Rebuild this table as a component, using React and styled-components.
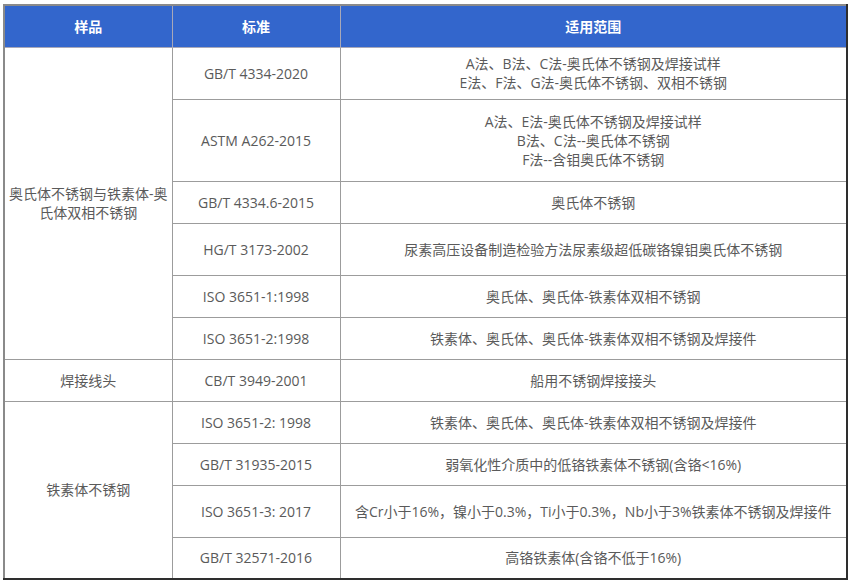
import React from "react";
import styled, { createGlobalStyle } from "styled-components";

const Global = createGlobalStyle`
  html, body { margin: 0; padding: 0; background: #fff; }
  body { font-family: "Open Sans", "Noto Sans CJK SC", sans-serif; }
`;

const Page = styled.div`
  padding: 4px 4px 0 3px;
`;

const Table = styled.table`
  width: 845px;
  border-collapse: collapse;
  table-layout: fixed;
  border-style: solid;
  border-width: 2px;
  border-color: #8a8a8a #2e2e2e #2e2e2e #8a8a8a;
  font-size: 14px;
  line-height: 19px;
  color: #5a5a5a;
`;

const Row = styled.tr`
  height: ${(p) => p.$h}px;
`;

const Head = styled.th`
  background: #3366cc;
  color: #fff;
  font-weight: bold;
  font-size: 14px;
  text-align: center;
  vertical-align: middle;
  border: 1px solid #a8a8b8;
  padding: 0;
`;

const Cell = styled.td`
  border: 1px solid #9c9c9c;
  text-align: center;
  vertical-align: middle;
  padding: 0 4px;
  white-space: nowrap;
`;

const rows = [
  { h: 52, std: "GB/T 4334-2020", scope: ["A法、B法、C法-奥氏体不锈钢及焊接试样", "E法、F法、G法-奥氏体不锈钢、双相不锈钢"] },
  { h: 82, std: "ASTM A262-2015", scope: ["A法、E法-奥氏体不锈钢及焊接试样", "B法、C法--奥氏体不锈钢", "F法--含钼奥氏体不锈钢"] },
  { h: 42, std: "GB/T 4334.6-2015", scope: ["奥氏体不锈钢"] },
  { h: 52, std: "HG/T 3173-2002", scope: ["尿素高压设备制造检验方法尿素级超低碳铬镍钼奥氏体不锈钢"] },
  { h: 42, std: "ISO 3651-1:1998", scope: ["奥氏体、奥氏体-铁素体双相不锈钢"] },
  { h: 42, std: "ISO 3651-2:1998", scope: ["铁素体、奥氏体、奥氏体-铁素体双相不锈钢及焊接件"] },
  { h: 42, std: "CB/T 3949-2001", scope: ["船用不锈钢焊接接头"] },
  { h: 42, std: "ISO 3651-2: 1998", scope: ["铁素体、奥氏体、奥氏体-铁素体双相不锈钢及焊接件"] },
  { h: 42, std: "GB/T 31935-2015", scope: ["弱氧化性介质中的低铬铁素体不锈钢(含铬<16%)"] },
  { h: 52, std: "ISO 3651-3: 2017", scope: ["含Cr小于16%，镍小于0.3%，Ti小于0.3%，Nb小于3%铁素体不锈钢及焊接件"] },
  { h: 42, std: "GB/T 32571-2016", scope: ["高铬铁素体(含铬不低于16%)"] },
];

const groups = {
  0: { span: 6, lines: ["奥氏体不锈钢与铁素体-奥", "氏体双相不锈钢"] },
  6: { span: 1, lines: ["焊接线头"] },
  7: { span: 4, lines: ["铁素体不锈钢"] },
};

const Lines = ({ lines }) =>
  lines.map((l, i) => (
    <React.Fragment key={i}>
      {i > 0 && <br />}
      {l}
    </React.Fragment>
  ));

export default function App() {
  return (
    <Page>
      <Global />
      <Table>
        <colgroup>
          <col style={{ width: "168px" }} />
          <col style={{ width: "168px" }} />
          <col />
        </colgroup>
        <thead>
          <Row $h={42}>
            <Head>样品</Head>
            <Head>标准</Head>
            <Head>适用范围</Head>
          </Row>
        </thead>
        <tbody>
          {rows.map((r, i) => (
            <Row key={i} $h={r.h}>
              {groups[i] && (
                <Cell rowSpan={groups[i].span}>
                  <Lines lines={groups[i].lines} />
                </Cell>
              )}
              <Cell>{r.std}</Cell>
              <Cell>
                <Lines lines={r.scope} />
              </Cell>
            </Row>
          ))}
        </tbody>
      </Table>
    </Page>
  );
}
